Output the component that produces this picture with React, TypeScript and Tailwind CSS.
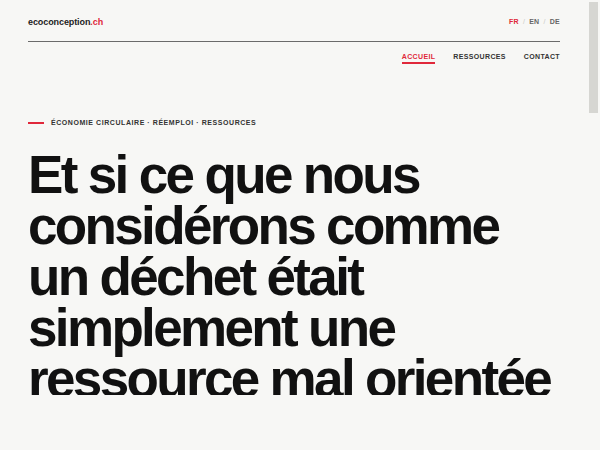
import React from 'react';

const NAV = [
  { label: 'Accueil', active: true },
  { label: 'Ressources', active: false },
  { label: 'Contact', active: false },
];

const LANGS = ['FR', 'EN', 'DE'];

const App: React.FC = () => {
  return (
    <div className="flex h-screen overflow-hidden bg-[#f7f7f5] text-[#1a1a1a] [font-family:'Liberation_Sans',Arial,sans-serif]">
      <div className="flex-1 min-w-0 px-7">
        {/* Top bar */}
        <header className="flex items-center justify-between pt-[16px] pb-[13px] border-b border-[#6b6b6b]">
          <a href="#" className="text-[9px] font-bold tracking-[-0.01em] text-[#222] leading-[12px]">
            ecoconception<span className="text-[#e0283a]">.ch</span>
          </a>
          <div className="flex items-center gap-1 text-[7px] font-bold tracking-[0.04em] leading-[12px]">
            {LANGS.map((lang, idx) => (
              <React.Fragment key={lang}>
                {idx > 0 && <span className="text-[#c9c9c6] font-normal">/</span>}
                <span className={idx === 0 ? 'text-[#e0283a]' : 'text-[#666]'}>{lang}</span>
              </React.Fragment>
            ))}
          </div>
        </header>

        {/* Navigation */}
        <nav className="flex justify-end gap-[18px] pt-[10px]">
          {NAV.map((item) => (
            <a
              key={item.label}
              href="#"
              className={
                item.active
                  ? 'text-[7px] font-bold uppercase tracking-[0.05em] leading-[9px] text-[#e0283a] border-b-2 border-[#e0283a] pb-[1px]'
                  : 'text-[7px] font-bold uppercase tracking-[0.05em] leading-[9px] text-[#333] pb-[3px]'
              }
            >
              {item.label}
            </a>
          ))}
        </nav>

        {/* Hero */}
        <section className="pt-[54px]">
          <div className="flex items-center gap-[7px]">
            <span className="block w-4 h-[2px] bg-[#e0283a]" />
            <span className="text-[7px] font-bold uppercase tracking-[0.08em] leading-[10px] text-[#333]">
              Économie circulaire · Réemploi · Ressources
            </span>
          </div>

          <div className="mt-[21px] h-[246px] overflow-hidden">
            <h1 className="text-[53px] font-bold leading-[51px] tracking-[-0.05em] text-[#111] max-w-[540px]">
              Et si ce que nous considérons comme un déchet était simplement une ressource mal orientée
            </h1>
          </div>
        </section>
      </div>

      {/* Scrollbar */}
      <div className="w-3 shrink-0 pt-[2px] pl-[1px] pr-[2px]">
        <div className="h-[111px] bg-[#d6d6d2]" />
      </div>
    </div>
  );
};

export default App;
